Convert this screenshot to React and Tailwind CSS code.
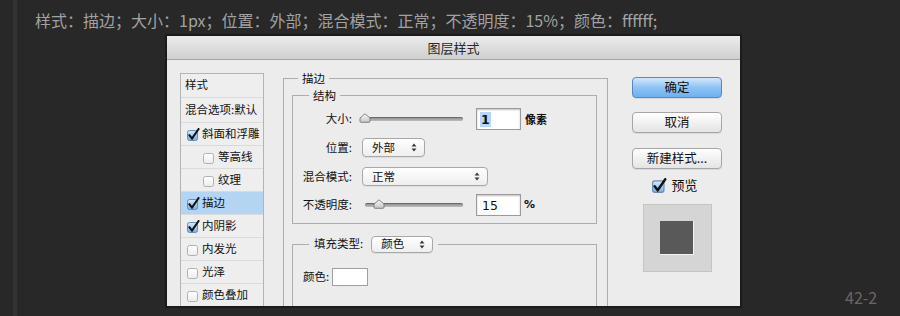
import React from "react";

const CJK = "font-[family-name:'Noto_Sans_CJK_SC','Noto_Sans',sans-serif]";

function Box({ checked, size = 11 }) {
  if (checked) {
    return (
      <svg width={size + 3} height={size + 2} viewBox="0 0 14 13" className="shrink-0">
        <defs>
          <linearGradient id="cbg" x1="0" y1="0" x2="0" y2="1">
            <stop offset="0" stopColor="#d8eafc" />
            <stop offset="1" stopColor="#76aee9" />
          </linearGradient>
        </defs>
        <rect x="0.5" y="2.5" width="10" height="10" rx="2" fill="url(#cbg)" stroke="#6b8db5" />
        <path d="M2.3 7.2 L5 10.6 L11.6 1" stroke="#111" strokeWidth="2.1" fill="none" strokeLinecap="round" />
      </svg>
    );
  }
  return (
    <svg width={size + 3} height={size + 2} viewBox="0 0 14 13" className="shrink-0">
      <defs>
        <linearGradient id="ubg" x1="0" y1="0" x2="0" y2="1">
          <stop offset="0" stopColor="#ffffff" />
          <stop offset="1" stopColor="#ececec" />
        </linearGradient>
      </defs>
      <rect x="0.5" y="2.5" width="10" height="10" rx="2" fill="url(#ubg)" stroke="#b0b0b0" />
    </svg>
  );
}

function Thumb() {
  return (
    <svg width="12" height="10" viewBox="0 0 12 10" className="shrink-0">
      <defs>
        <linearGradient id="thg" x1="0" y1="0" x2="0" y2="1">
          <stop offset="0" stopColor="#fafafa" />
          <stop offset="1" stopColor="#c4c4c4" />
        </linearGradient>
      </defs>
      <path d="M1 8.3 V5 L6 0.8 L11 5 V8.3 Q11 9.3 10 9.3 H2 Q1 9.3 1 8.3Z" fill="url(#thg)" stroke="#777" strokeWidth="0.9" />
    </svg>
  );
}

function Slider({ w, thumbOffset }) {
  return (
    <div className={`flex items-center ${w}`}>
      <div className="relative h-[4px] w-full rounded-full bg-linear-to-b from-[#8c8c8c] to-[#bdbdbd] shadow-[inset_0_1px_1px_rgba(0,0,0,0.3)]">
        <div className={`absolute top-[-4px] ${thumbOffset}`}>
          <Thumb />
        </div>
      </div>
    </div>
  );
}

function Arrows() {
  return (
    <svg width="6" height="9" viewBox="0 0 6 9" className="shrink-0">
      <path d="M0.5 3.5 L3 0.5 L5.5 3.5Z" fill="#3a3a3a" />
      <path d="M0.5 5.5 L3 8.5 L5.5 5.5Z" fill="#3a3a3a" />
    </svg>
  );
}

function Select({ w, h = "h-[19px]", children }) {
  return (
    <div
      className={`flex ${w} ${h} items-center justify-between rounded-[4px] border border-[#a8a8a8] bg-linear-to-b from-white to-[#eeeeee] pl-[9px] pr-[7px] shadow-[0_1px_0_rgba(0,0,0,0.06)]`}
    >
      <span className="text-[11.5px] leading-none text-[#111]">{children}</span>
      <Arrows />
    </div>
  );
}

function NumInput({ children }) {
  return (
    <div className="flex h-[22px] w-[45px] items-center border border-[#9a9a9a] bg-white pl-[3px] shadow-[inset_0_1px_2px_rgba(0,0,0,0.25)]">
      {children}
    </div>
  );
}

function ListRow({ children, h = "h-[23px]", extra = "" }) {
  return (
    <div className={`flex ${h} items-center border-b border-[#dadada] ${extra}`}>{children}</div>
  );
}

function Button({ primary, children, className = "" }) {
  return (
    <div
      className={`flex h-[21px] w-[90px] items-center justify-center rounded-[4px] border text-[12.5px] text-[#111] ${
        primary
          ? "border-[#5a86bd] bg-linear-to-b from-[#d2e7fb] via-[#8fc3f3] to-[#6db0f0]"
          : "border-[#a6a6a6] bg-linear-to-b from-white to-[#e4e4e4]"
      } shadow-[0_1px_0_rgba(0,0,0,0.08)] ${className}`}
    >
      {children}
    </div>
  );
}

export default function App() {
  return (
    <div className={`flex h-[316px] w-[900px] overflow-hidden bg-[#282828] ${CJK}`}>
      <div className="ml-[13px] h-full w-[4px] bg-[#333333]" />
      <div className="flex flex-col pl-[18px]">
        <div className="pt-[11px] text-[16px] leading-[18px] whitespace-nowrap text-[#a2a2a2]">
          样式：描边；大小：1px；位置：外部；混合模式：正常；不透明度：15%；颜色：ffffff;
        </div>
        <div className="mt-[7px] flex">
          <div className="ml-[132px] flex h-[270px] w-[573px] flex-col overflow-hidden bg-[#ececec] shadow-[0_0_0_2px_#1b1b1b]">
            {/* title bar */}
            <div className="flex h-[24px] shrink-0 items-center justify-center border-b border-[#a5a5a5] bg-linear-to-b from-[#ececec] to-[#cfcfcf] text-[13px] text-[#2a2a2a]">
              图层样式
            </div>
            {/* body */}
            <div className="flex items-start pt-[10px] pl-[13px] text-[11.5px] text-[#111]">
              {/* list */}
              <div className="mt-[3px] w-[84px] shrink-0 border border-[#b4b4b4] bg-[#eeeeee]">
                <ListRow h="h-[24px]" extra="items-start pt-[2px] pl-[4px]">样式</ListRow>
                <ListRow h="h-[25px]" extra="pl-[4px] whitespace-nowrap">混合选项:默认</ListRow>
                <ListRow extra="pl-[6px] gap-[1px] whitespace-nowrap">
                  <Box checked />斜面和浮雕
                </ListRow>
                <ListRow extra="pl-[22px] gap-[1px]">
                  <Box />等高线
                </ListRow>
                <ListRow extra="pl-[22px] gap-[1px]">
                  <Box />纹理
                </ListRow>
                <ListRow extra="pl-[6px] gap-[1px] bg-[#b4d4f4]">
                  <Box checked />描边
                </ListRow>
                <ListRow extra="pl-[6px] gap-[1px]">
                  <Box checked />内阴影
                </ListRow>
                <ListRow extra="pl-[6px] gap-[1px]">
                  <Box />内发光
                </ListRow>
                <ListRow extra="pl-[6px] gap-[1px]">
                  <Box />光泽
                </ListRow>
                <ListRow extra="pl-[6px] gap-[1px] whitespace-nowrap">
                  <Box />颜色叠加
                </ListRow>
              </div>

              {/* 描边 group */}
              <fieldset className="ml-[19px] h-[300px] w-[325px] shrink-0 border border-[#adadad] pt-[1px] pl-[8px]">
                <legend className="ml-[6px] px-[4px] leading-[16px]">描边</legend>
                <fieldset className="w-[305px] border border-[#adadad] pt-[5px] pb-[7px]">
                  <legend className="ml-[16px] px-[4px] leading-[16px]">结构</legend>
                  <div className="flex h-[22px] items-center">
                    <div className="w-[59px] text-right">大小:</div>
                    <div className="ml-[8px]">
                      <Slider w="w-[103px]" thumbOffset="left-[-1px]" />
                    </div>
                    <div className="ml-[13px]">
                      <NumInput>
                        <span className="bg-[#b4d5fe] px-[1px] font-[family-name:'DejaVu_Sans',sans-serif] text-[12.5px] font-semibold leading-[15px] text-[#111]">
                          1
                        </span>
                      </NumInput>
                    </div>
                    <div className="ml-[4px] text-[11px] font-bold">像素</div>
                  </div>
                  <div className="mt-[8px] flex h-[19px] items-center">
                    <div className="w-[59px] text-right">位置:</div>
                    <div className="ml-[10px]">
                      <Select w="w-[63px]">外部</Select>
                    </div>
                  </div>
                  <div className="mt-[10px] flex h-[19px] items-center">
                    <div className="w-[59px] text-right">混合模式:</div>
                    <div className="ml-[10px]">
                      <Select w="w-[126px]">正常</Select>
                    </div>
                  </div>
                  <div className="mt-[8px] flex h-[22px] items-center">
                    <div className="w-[59px] text-right whitespace-nowrap">不透明度:</div>
                    <div className="ml-[13px]">
                      <Slider w="w-[98px]" thumbOffset="left-[8px]" />
                    </div>
                    <div className="ml-[13px]">
                      <NumInput>
                        <span className="pl-[2px] font-[family-name:'DejaVu_Sans',sans-serif] text-[12.5px] font-normal leading-[15px] text-[#111]">
                          15
                        </span>
                      </NumInput>
                    </div>
                    <div className="ml-[3px] font-[family-name:'DejaVu_Sans',sans-serif] text-[11px] font-bold">%</div>
                  </div>
                </fieldset>
                <fieldset className="mt-[11px] h-[120px] w-[305px] border border-[#adadad] pt-[15px] pl-[10px]">
                  <legend className="ml-[6px] flex h-[18px] items-center px-[5px]">
                    <span>填充类型:</span>
                    <div className="ml-[8px]">
                      <Select w="w-[62px]" h="h-[17px]">颜色</Select>
                    </div>
                  </legend>
                  <div className="flex items-center">
                    <span>颜色:</span>
                    <div className="ml-[3px] h-[18px] w-[36px] border border-[#a0a0a0] bg-white" />
                  </div>
                </fieldset>
              </fieldset>

              {/* right column */}
              <div className="mt-[7px] ml-[24px] flex w-[90px] shrink-0 flex-col">
                <Button primary>确定</Button>
                <Button className="mt-[14px]">取消</Button>
                <Button className="mt-[15px]">新建样式...</Button>
                <div className="mt-[9px] flex h-[14px] items-center justify-center gap-[3px] pr-[4px] text-[13px]">
                  <Box checked size={13} />
                  <span>预览</span>
                </div>
                <div className="mx-auto mt-[12px] flex h-[68px] w-[69px] items-center justify-center border border-[#c4c4c4] bg-[#d5d5d5]">
                  <div className="h-[34px] w-[34px] border-r border-b border-[#f2f2f2] bg-[#595959]" />
                </div>
              </div>
            </div>
          </div>
          <div className="ml-[105px] self-end text-[16px] leading-[18px] text-[#6f6363]">42-2</div>
        </div>
      </div>
    </div>
  );
}
